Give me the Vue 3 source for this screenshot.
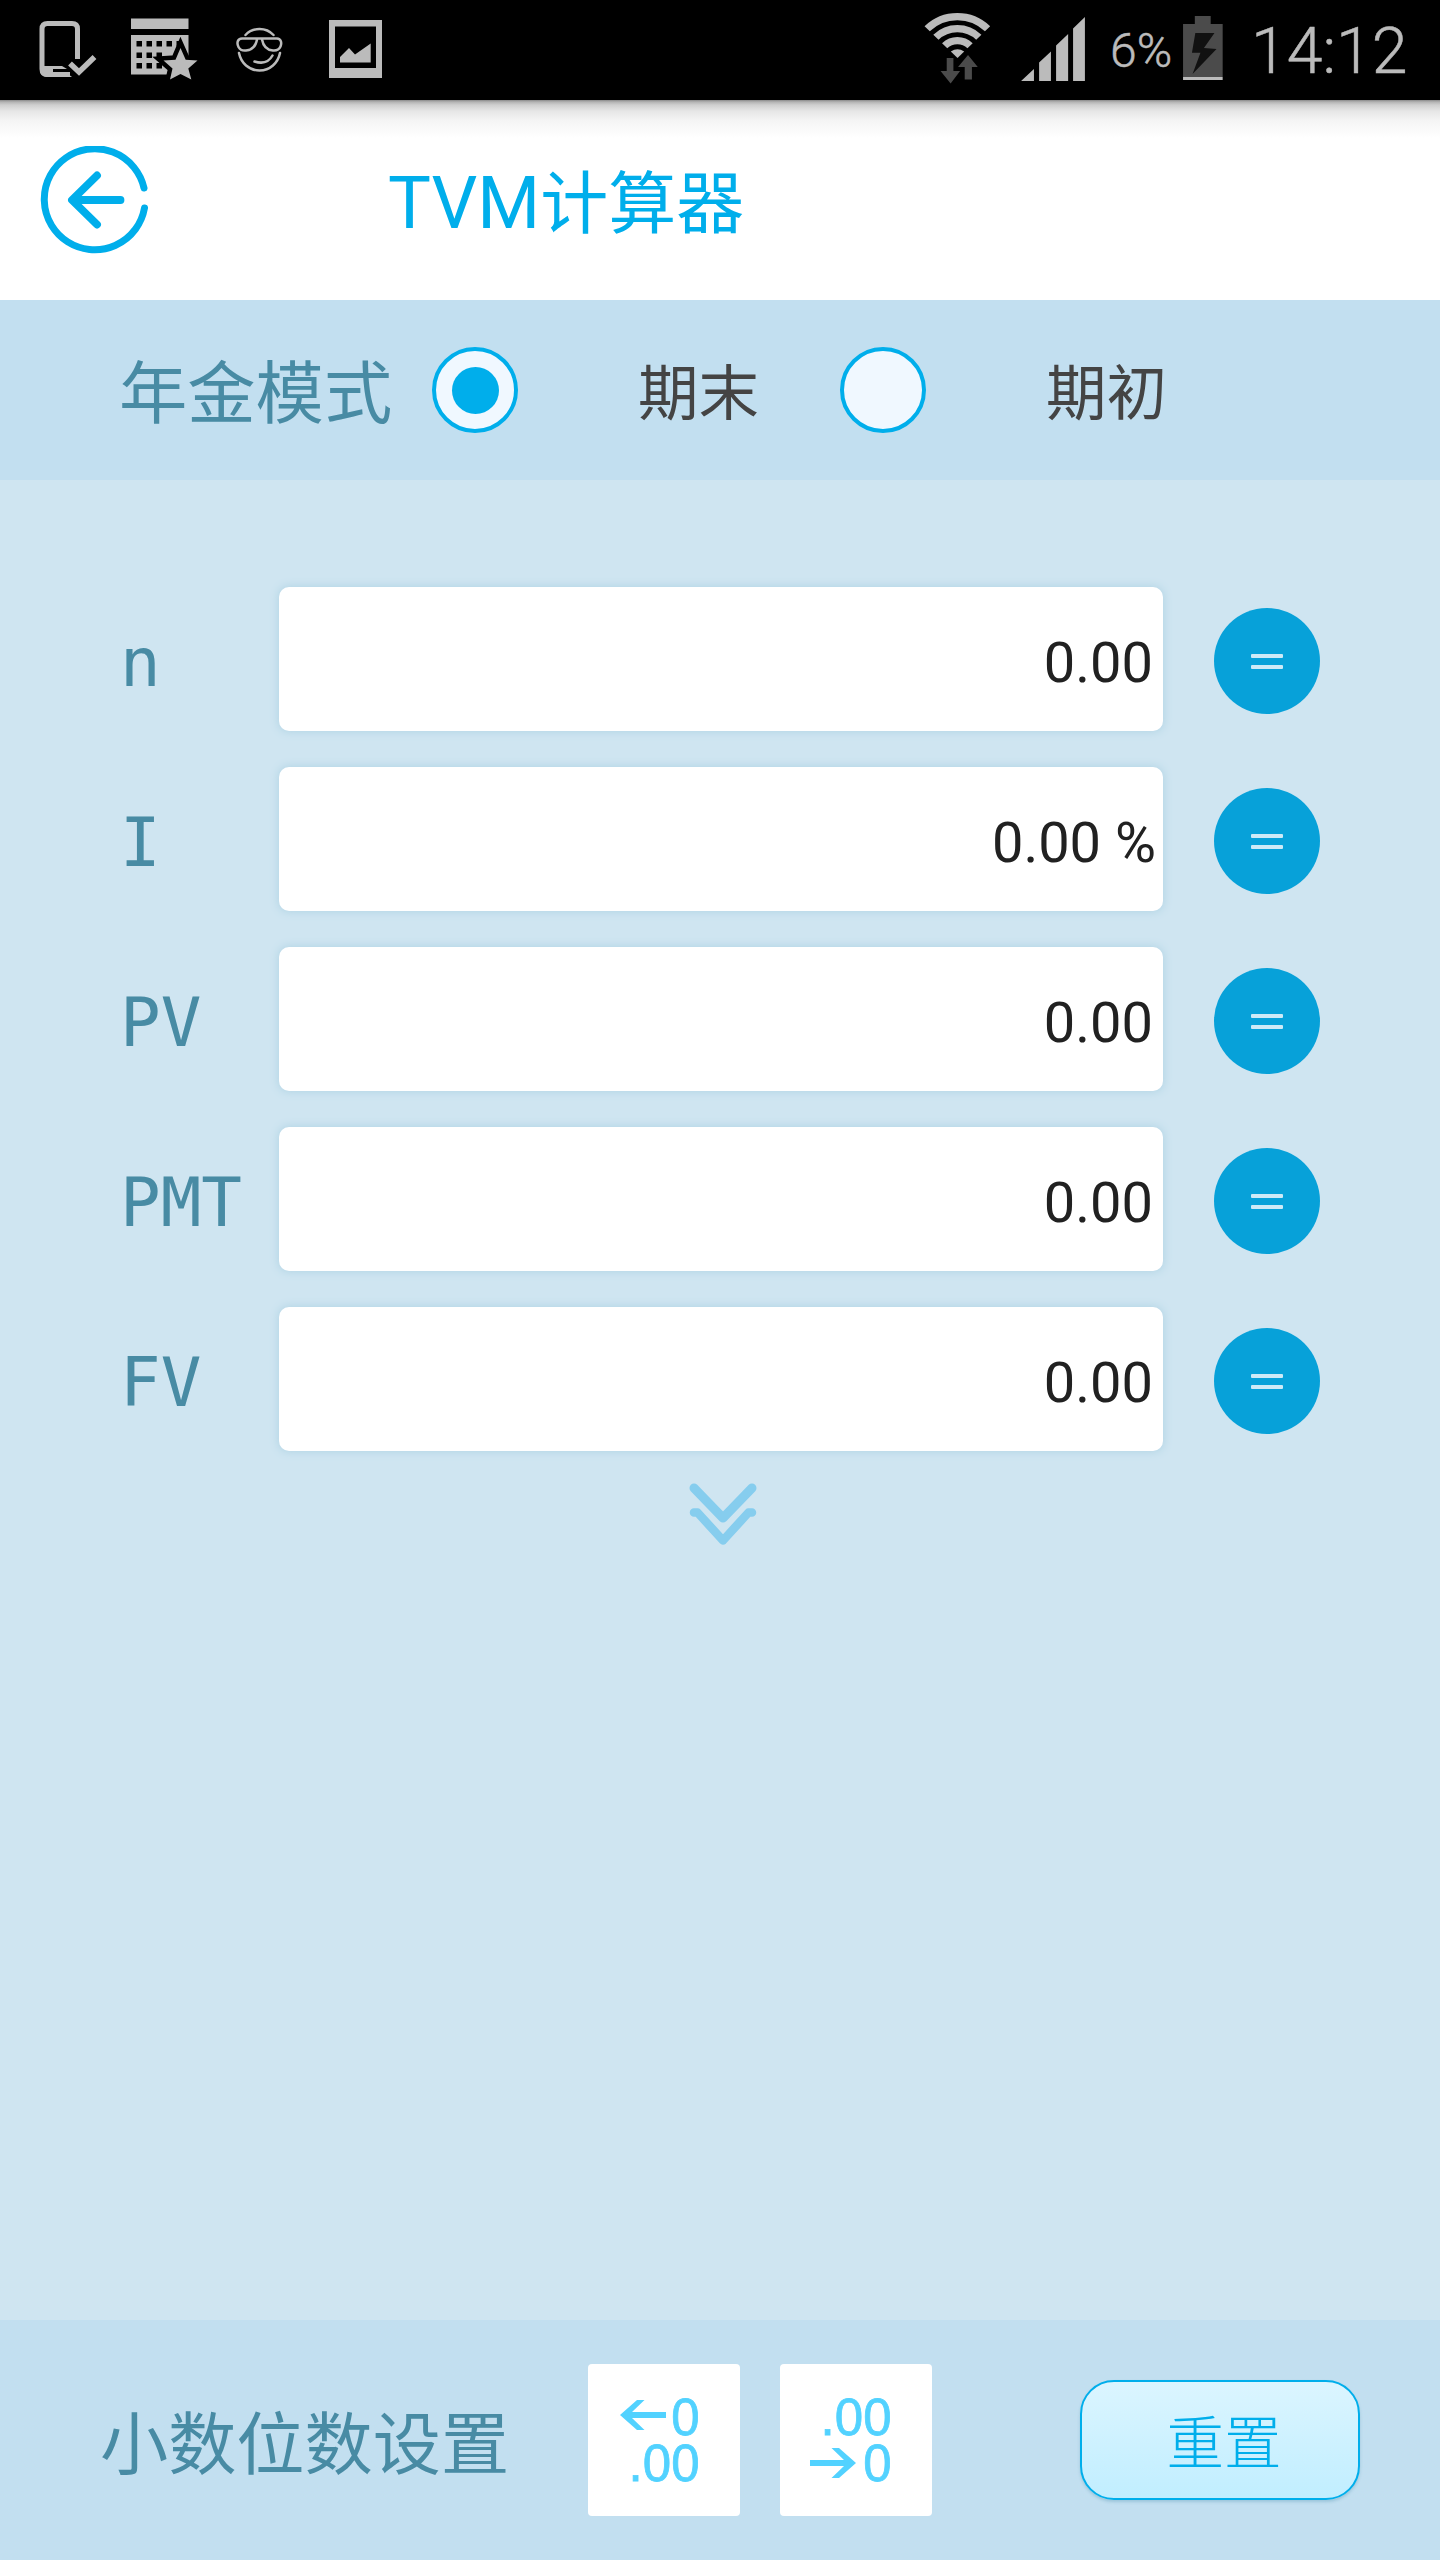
<template>
  <div class="screen">
    <div class="status-bar">
      <div class="status-bar__left">
        <svg class="ico-phone" viewBox="36 0 62 100" width="62" height="100">
          <path d="M77.500 59V29q0-5.500-5.500-5.500H47.500q-5.500 0-5.500 5.500V69q0 5.500 5.500 5.500H70" fill="none" stroke="#bbb" stroke-width="5" />
          <path d="M42 66H62l5 3H53v5h15l4 3H46q-5-1-5-5Z" fill="#bbb" />
          <path d="M70 63.500l9 8.500L94.500 57" fill="none" stroke="#bbb" stroke-width="5.500" />
        </svg>
        <svg class="ico-calendar" viewBox="128 0 72 100" width="72" height="100">
          <path d="M131 18.500h57.500V29H131ZM131 35h57.500v39.500H131Z" fill="#bbb" />
          <g fill="#000">
            <rect v-for="dot in calendarDots" :key="dot.id" :x="dot.x" :y="dot.y" width="5.500" height="5.500" />
          </g>
          <path d="M180.500 48l5.200 11.800 11.800.7-9.200 8 3 11.100-10.800-5.600-10.500 5.600 2.500-11.200-9-7.900 12-.7Z" fill="#bbb" stroke="#000" stroke-width="9" paint-order="stroke" />
        </svg>
        <svg class="ico-face" viewBox="234 0 52 100" width="52" height="100">
          <g fill="none" stroke="#bbb" stroke-width="2.500" stroke-linecap="round">
            <path d="M245.500 35Q251 29 259.500 29T273.500 35" />
            <path d="M239 53C241 63 249 70.500 259.500 70.500S278 63 280 53" />
            <path d="M242 38.500H277C281 38.500 282 43 280.500 46.500Q278.500 51 273 50.500C266 50 263 45 262 39.500M242 38.500C237.500 38.500 236.500 43 238.500 47Q240.500 51 246 50.500C253 50 256 45 257 39.500" />
            <path d="M254.500 61.500Q267 65.500 272.500 55.500" />
          </g>
        </svg>
        <svg class="ico-picture" viewBox="328 0 56 100" width="56" height="100">
          <path d="M329 20h53v58h-53ZM335 26.500v41.500h41V26.500Z" fill="#bbb" fill-rule="evenodd" />
          <path d="M340 62.500v-5.500l9-9 6 6.500 15.700-11v19Z" fill="#bbb" />
        </svg>
      </div>
      <div class="status-bar__right">
        <svg class="ico-wifi" viewBox="920 0 70 100" width="72" height="100" preserveAspectRatio="none">
          <g fill="none" stroke="#bbb" stroke-width="7.200">
            <path d="M926 28.700A41.500 41.500 0 0 1 984.700 28.700" />
            <path d="M934.500 37.200A29.500 29.500 0 0 1 976.200 37.200" />
            <path d="M943 45.700A17.500 17.500 0 0 1 967.700 45.700" />
          </g>
          <path d="M949 51.500Q955.500 47 962 51.500L955.500 58Z" fill="#bbb" />
          <path d="M945 58h6.500v13h6.500l-9.200 12.500L939 71h6ZM965.700 55l9.500 12h-5.700v12.500h-7V67h-6.500Z" fill="#4b4b4b" />
        </svg>
        <svg class="ico-signal" viewBox="1014 0 68 100" width="70" height="100" preserveAspectRatio="none">
          <path d="M1017 81l12.500-12v12ZM1034.500 62.500l11.500-11V81h-11.500ZM1051 45.500l11.700-11.500v47H1051ZM1067.500 28.500l11.500-11.500v64h-11.500Z" fill="#bbb" />
        </svg>
        <span class="battery-text">6%</span>
        <svg class="ico-battery" viewBox="1172 0 42 100" width="43" height="100" preserveAspectRatio="none">
          <path d="M1185.500 16h15.500v8h11.700v53H1174V24h11.500Z" fill="#4b4b4b" />
          <path d="M1174 77h38.700v3H1174Z" fill="#bbb" />
          <path d="M1186 33h18.700l-10.300 15 12.300 1L1183.300 74l7.700-21.300h-8.300Z" fill="#111" />
        </svg>
        <span class="clock">14:12</span>
      </div>
    </div>

    <header class="header">
      <svg class="back" viewBox="0 0 108 108" width="108" height="108">
        <g fill="none" stroke="#00aeeb" stroke-linecap="round" stroke-linejoin="round">
          <path d="M104 42A50.500 50.500 0 1 0 104.500 62" stroke-width="7" />
          <path d="M57 29.500L32 54l25 24.500M34 54h46.500" stroke-width="7.800" />
        </g>
      </svg>
      <h1 class="title">TVM<span class="title__cjk">计算器</span></h1>
    </header>

    <section class="mode">
      <span class="mode__label">年金模式</span>
      <label v-for="item in modes" :key="item.value" class="option" @click="mode = item.value">
        <span class="radio"><span v-if="mode === item.value" class="radio__dot"></span></span>
        <span class="option__text">{{ item.text }}</span>
      </label>
    </section>

    <main class="fields">
      <div v-for="field in fields" :key="field.name" class="field">
        <span class="field__name">{{ field.name }}</span>
        <div class="field__box" :class="{ 'field__box--percent': field.percent }">{{ format(field) }}</div>
        <button class="equals">
          <span class="equals__bar"></span>
          <span class="equals__bar"></span>
        </button>
      </div>
      <svg class="more" viewBox="0 0 70 68" width="70" height="68">
        <g fill="none" stroke="#86cdee" stroke-linecap="round" stroke-linejoin="round">
          <path d="M6 6L35 36 64 6" stroke-width="9" />
          <path d="M6 30.500h3.500L35 58.500l25.500-28H64" stroke-width="8.500" />
        </g>
      </svg>
    </main>

    <footer class="footer">
      <span class="footer__label">小数位数设置</span>
      <button class="digits" @click="decimals = Math.min(decimals + 1, 8)">
        <svg viewBox="0 0 152 152" width="152" height="152">
          <path d="M32 51L49 36h7.500L44 48h34v6H44l12.500 12H49Z" />
          <text><tspan x="83.300" y="71.300">0</tspan><tspan x="40.600" y="117.300">.00</tspan></text>
        </svg>
      </button>
      <button class="digits" @click="decimals = Math.max(decimals - 1, 0)">
        <svg viewBox="0 0 152 152" width="152" height="152">
          <path d="M76 99L59 84h-7.500L64 96H30v6h34l-12.500 12H59Z" />
          <text><tspan x="40.600" y="71.300">.00</tspan><tspan x="83.300" y="117.300">0</tspan></text>
        </svg>
      </button>
      <button class="reset" @click="reset">重置</button>
    </footer>
  </div>
</template>
<script setup>
import { ref } from "vue";

const mode = ref("end")
const modes = [
  { value: "end", text: "期末" },
  { value: "begin", text: "期初" },
];
const decimals = ref(2)
const fields = ref([
  { name: "n", value: 0 },
  { name: "I", value: 0, percent: true },
  { name: "PV", value: 0 },
  { name: "PMT", value: 0 },
  { name: "FV", value: 0 },
]);

const format = (field) => field.value.toFixed(decimals.value) + (field.percent ? " %" : "");

const reset = () => {
  fields.value.forEach((field) => { field.value = 0 });
}

// day squares of the calendar icon, without those under the star
const calendarDots = [41, 52.5, 63].flatMap((y, row) =>
  [136.5, 146.5, 156.5, 166.5, 176.5]
    .slice(0, row === 0 ? 5 : 3)
    .map((x) => ({ id: `${x}-${y}`, x, y }))
);
</script>
<style>
body {
  background: #cfe5f1;
}
</style>
<style scoped>
.screen {
  display: flex;
  flex-direction: column;
  width: 1440px;
  height: 2560px;
  background: #cfe5f1;
  font-family: Roboto, "Noto Sans CJK SC", sans-serif;
}
button {
  border: 0;
  padding: 0;
  margin: 0;
}
svg {
  display: block;
  flex: none;
}
.status-bar {
  display: flex;
  justify-content: space-between;
  height: 100px;
  background: #000;
  color: #bbb;
  font-weight: 300;
  -webkit-text-stroke: 0.5px #bbb;
}
.status-bar__left,
.status-bar__right {
  display: flex;
}
.status-bar__left {
  padding-left: 36px;
}
.ico-calendar {
  margin-left: 30px;
}
.ico-face {
  margin-left: 34px;
}
.ico-picture {
  margin-left: 42px;
}
.status-bar__right {
  width: 519px;
}
.ico-signal {
  margin-left: 25px;
}
.battery-text {
  width: 71px;
  margin-left: 22px;
  font-size: 48px;
  line-height: 102px;
}
.clock {
  margin-left: 27px;
  font-size: 64.5px;
  line-height: 103px;
}
.header {
  display: flex;
  align-items: center;
  height: 200px;
  padding-left: 40px;
  box-sizing: border-box;
  background: linear-gradient(#8a8a8a 0, #b4b4b4 2px, #cfcfcf 5px, #e6e6e6 11px, #f5f5f5 21px, #fff 38px);
}
.title {
  margin: 0 0 0 240px;
  padding-top: 9px;
  color: #00aeeb;
  font-size: 72px;
  font-weight: 400;
  line-height: 100px;
}
.title__cjk {
  font-size: 68px;
}
.mode {
  display: flex;
  align-items: center;
  height: 180px;
  padding-left: 119px;
  background: #c2dff0;
}
.mode__label {
  width: 313px;
  padding-top: 10px;
  color: #488ba4;
  font-size: 68.300px;
  line-height: 100px;
}
.option {
  display: flex;
  align-items: center;
  width: 408px;
}
.radio {
  display: flex;
  align-items: center;
  justify-content: center;
  width: 86px;
  height: 86px;
  border: 4px solid #00aeeb;
  border-radius: 50%;
  box-sizing: border-box;
  background: #f0f8ff;
}
.radio__dot {
  width: 47px;
  height: 47px;
  border-radius: 50%;
  background: #00aeeb;
}
.option__text {
  margin-left: 120px;
  padding-top: 10px;
  color: #444;
  font-size: 60.500px;
  line-height: 88px;
}
.fields {
  flex: 1;
  padding: 89px 0 0 120px;
}
.field {
  display: flex;
  align-items: center;
  height: 180px;
}
.field__name {
  width: 159px;
  padding-top: 7px;
  color: #488ba4;
  font-family: "DejaVu Sans Mono", monospace;
  font-size: 67.500px;
  line-height: 90px;
}
.field__box {
  width: 884px;
  height: 144px;
  padding: 8px 10px 0 0;
  box-sizing: border-box;
  border-radius: 10px;
  background: #fff;
  box-shadow: 0 0 8px 1px #b3d5e5;
  color: #212121;
  font-size: 56px;
  line-height: 136px;
  text-align: right;
}
.field__box--percent {
  padding-right: 7px;
}
.equals {
  display: flex;
  flex-direction: column;
  align-items: center;
  justify-content: center;
  gap: 7px;
  width: 106px;
  height: 106px;
  margin: 4px 0 0 51px;
  border-radius: 50%;
  background: #07a1d9;
}
.equals__bar {
  width: 32px;
  height: 4px;
  border-radius: 1px;
  background: #cdeaf7;
}
.more {
  margin: 13px 0 0 568px;
}
.footer {
  display: flex;
  align-items: center;
  height: 240px;
  background: #c2dff0;
}
.footer__label {
  width: 488px;
  padding: 11px 0 0 100px;
  color: #488ba4;
  font-size: 68.200px;
  line-height: 100px;
}
.digits {
  width: 152px;
  height: 152px;
  margin-right: 40px;
  border-radius: 4px;
  background: #fff;
  fill: #52d2ff;
  font-family: "Liberation Sans", Arial, sans-serif;
  font-size: 51px;
}
.digits text {
  stroke: #52d2ff;
  stroke-width: 0.8px;
}
.reset {
  width: 280px;
  height: 120px;
  margin-left: 108px;
  padding: 0 0 3px 8px;
  border: 2px solid #00aeeb;
  border-radius: 34px;
  background: linear-gradient(#dbf5ff, #c1eeff);
  box-shadow: 0 2px 3px rgba(70, 140, 170, 0.3);
  color: #00aeeb;
  font-family: "Noto Sans CJK SC", sans-serif;
  font-size: 57.500px;
  font-weight: 300;
  line-height: 112px;
}
</style>
